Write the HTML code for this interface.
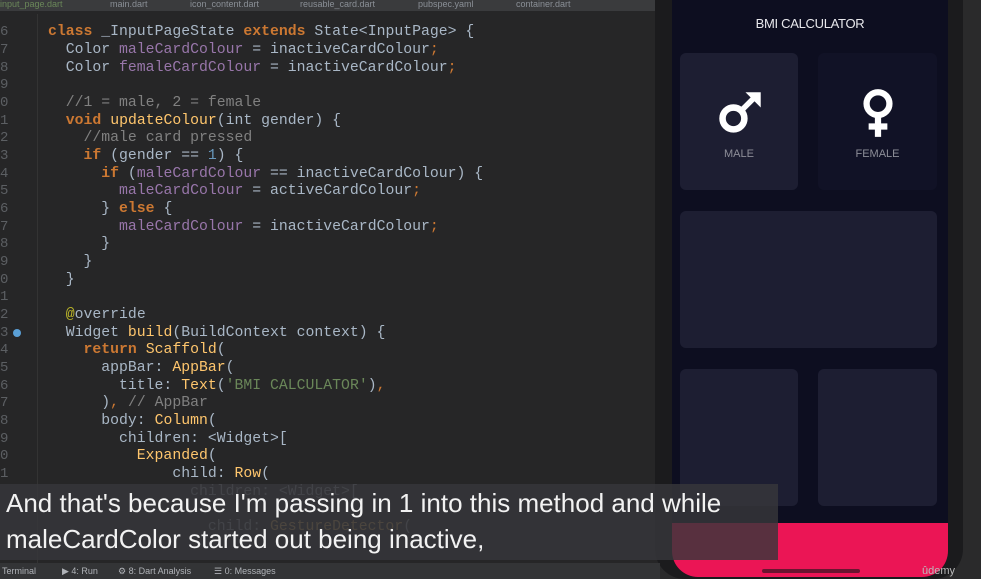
<!DOCTYPE html>
<html><head><style>
*{margin:0;padding:0;box-sizing:border-box}
body{width:981px;height:579px;overflow:hidden;background:#2a2a2b;position:relative;font-family:"Liberation Mono",monospace}
.tabs{position:absolute;left:0;top:0;width:660px;height:11px;background:#3a3b3d;font:9px "Liberation Sans",sans-serif;color:#8a8f96;white-space:nowrap;overflow:hidden}
.tabs span{position:absolute;top:-1px}
.code{position:absolute;left:0;top:0;width:660px;height:563px;background:#262627}
.ln{position:absolute;left:0;font-size:14px;color:#5c5f63;width:10px}
.l{position:absolute;left:48px;font-size:14.8px;color:#a9b7c6;white-space:pre;line-height:17px}
.k{color:#cc7832;font-weight:bold}.p{color:#9876aa}.f{color:#ffc66d}.c{color:#808080}.s{color:#6a8759}.n{color:#6897bb}.o{color:#cc7832}.a{color:#bbb529}
.gut{position:absolute;left:37px;top:14px;width:1px;height:550px;background:#333}
.phone{position:absolute;left:655px;top:0;width:308px;height:579px;background:#1b1b1d;border-radius:0 0 30px 30px}
.scr{position:absolute;left:672px;top:0;width:276px;height:577px;background:#0d0e20;border-radius:0 0 26px 26px;overflow:hidden}
.card{position:absolute;background:#1d1e32;border-radius:6px}
.lbl{position:absolute;width:100%;text-align:center;top:95px;font:11px "Liberation Sans",sans-serif;color:#8d8e98}
.sub{position:absolute;left:0;top:484px;width:778px;height:76px;background:rgba(55,55,58,0.82)}
.st{position:absolute;left:6px;font:26px "Liberation Sans",sans-serif;color:#f2f2f2;white-space:nowrap;letter-spacing:0}
.bar{position:absolute;left:0;top:563px;width:660px;height:16px;background:#333436;font:9px "Liberation Sans",sans-serif;color:#b0b3b8;white-space:nowrap}
.bar span{position:absolute;top:3px}
</style></head><body>
<div class="code">
<div class="gut"></div>
<div class="ln" style="top:24px">6</div><div class="ln" style="top:42px">7</div><div class="ln" style="top:60px">8</div><div class="ln" style="top:77px">9</div><div class="ln" style="top:95px">0</div><div class="ln" style="top:113px">1</div><div class="ln" style="top:130px">2</div><div class="ln" style="top:148px">3</div><div class="ln" style="top:166px">4</div><div class="ln" style="top:183px">5</div><div class="ln" style="top:201px">6</div><div class="ln" style="top:219px">7</div><div class="ln" style="top:236px">8</div><div class="ln" style="top:254px">9</div><div class="ln" style="top:272px">0</div><div class="ln" style="top:289px">1</div><div class="ln" style="top:307px">2</div><div class="ln" style="top:325px">3</div><div class="ln" style="top:342px">4</div><div class="ln" style="top:360px">5</div><div class="ln" style="top:378px">6</div><div class="ln" style="top:395px">7</div><div class="ln" style="top:413px">8</div><div class="ln" style="top:431px">9</div><div class="ln" style="top:448px">0</div><div class="ln" style="top:466px">1</div>
<div style="position:absolute;left:13px;top:329px;width:8px;height:8px;border-radius:50%;background:#5a9fd6"></div>
<div class="l" style="top:24px"><span class="k">class</span> _InputPageState <span class="k">extends</span> State&lt;InputPage&gt; {</div>
<div class="l" style="top:42px">  Color <span class="p">maleCardColour</span> = inactiveCardColour<span class="o">;</span></div>
<div class="l" style="top:60px">  Color <span class="p">femaleCardColour</span> = inactiveCardColour<span class="o">;</span></div>
<div class="l" style="top:95px">  <span class="c">//1 = male, 2 = female</span></div>
<div class="l" style="top:113px">  <span class="k">void</span> <span class="f">updateColour</span>(int gender) {</div>
<div class="l" style="top:130px">    <span class="c">//male card pressed</span></div>
<div class="l" style="top:148px">    <span class="k">if</span> (gender == <span class="n">1</span>) {</div>
<div class="l" style="top:166px">      <span class="k">if</span> (<span class="p">maleCardColour</span> == inactiveCardColour) {</div>
<div class="l" style="top:183px">        <span class="p">maleCardColour</span> = activeCardColour<span class="o">;</span></div>
<div class="l" style="top:201px">      } <span class="k">else</span> {</div>
<div class="l" style="top:219px">        <span class="p">maleCardColour</span> = inactiveCardColour<span class="o">;</span></div>
<div class="l" style="top:236px">      }</div>
<div class="l" style="top:254px">    }</div>
<div class="l" style="top:272px">  }</div>
<div class="l" style="top:307px">  <span class="a">@</span>override</div>
<div class="l" style="top:325px">  Widget <span class="f">build</span>(BuildContext context) {</div>
<div class="l" style="top:342px">    <span class="k">return</span> <span class="f">Scaffold</span>(</div>
<div class="l" style="top:360px">      appBar: <span class="f">AppBar</span>(</div>
<div class="l" style="top:378px">        title: <span class="f">Text</span>(<span class="s">'BMI CALCULATOR'</span>)<span class="o">,</span></div>
<div class="l" style="top:395px">      )<span class="o">,</span> <span class="c">// AppBar</span></div>
<div class="l" style="top:413px">      body: <span class="f">Column</span>(</div>
<div class="l" style="top:431px">        children: &lt;Widget&gt;[</div>
<div class="l" style="top:448px">          <span class="f">Expanded</span>(</div>
<div class="l" style="top:466px">              child: <span class="f">Row</span>(</div>
<div class="l" style="top:484px;opacity:.6">                children: &lt;Widget&gt;[</div>
<div class="l" style="top:519px;opacity:.6">                  child: <span class="f">GestureDetector</span>(</div>
</div>
<div class="tabs"><span style="left:0;color:#6a8759">input_page.dart</span><span style="left:110px">main.dart</span><span style="left:190px">icon_content.dart</span><span style="left:300px">reusable_card.dart</span><span style="left:418px">pubspec.yaml</span><span style="left:516px">container.dart</span></div>
<div class="phone"></div>
<div class="scr">
<div style="position:absolute;top:16px;width:100%;text-align:center;font:13px 'Liberation Sans',sans-serif;color:#e8e8ec;letter-spacing:-0.3px">BMI CALCULATOR</div>
<div class="card" style="left:8px;top:53px;width:118px;height:137px">
<svg style="position:absolute;left:36px;top:36px" width="48" height="48" viewBox="0 0 44 44"><circle cx="16" cy="27" r="10" fill="none" stroke="#fff" stroke-width="6"/><path d="M23 20 L36 7" stroke="#fff" stroke-width="5"/><path d="M27 3 L41 3 L41 17 Z" fill="#fff"/></svg>
<div class="lbl">MALE</div></div>
<div class="card" style="left:146px;top:53px;width:119px;height:137px;background:#111226">
<svg style="position:absolute;left:43px;top:34px" width="34" height="52" viewBox="0 0 32 50"><circle cx="16" cy="16" r="11" fill="none" stroke="#fff" stroke-width="6"/><path d="M16 27 V48 M7 38 H25" stroke="#fff" stroke-width="6"/></svg>
<div class="lbl">FEMALE</div></div>
<div class="card" style="left:8px;top:211px;width:257px;height:137px"></div>
<div class="card" style="left:8px;top:369px;width:118px;height:137px"></div>
<div class="card" style="left:146px;top:369px;width:119px;height:137px"></div>
<div style="position:absolute;left:0;top:523px;width:276px;height:60px;background:#eb1555"></div>
<div style="position:absolute;left:90px;top:569px;width:98px;height:4px;border-radius:2px;background:#6a1530"></div>
</div>
<div style="position:absolute;left:922px;top:565px;font:11px 'Liberation Sans',sans-serif;color:#bbb">ûdemy</div>
<div class="sub"><div class="st" style="top:4px">And that's because I'm passing in 1 into this method and while</div><div class="st" style="top:40px">maleCardColor started out being inactive,</div></div>
<div class="bar"><span style="left:2px">Terminal</span><span style="left:62px">▶ 4: Run</span><span style="left:118px">⚙ 8: Dart Analysis</span><span style="left:214px">☰ 0: Messages</span></div>
</body></html>
